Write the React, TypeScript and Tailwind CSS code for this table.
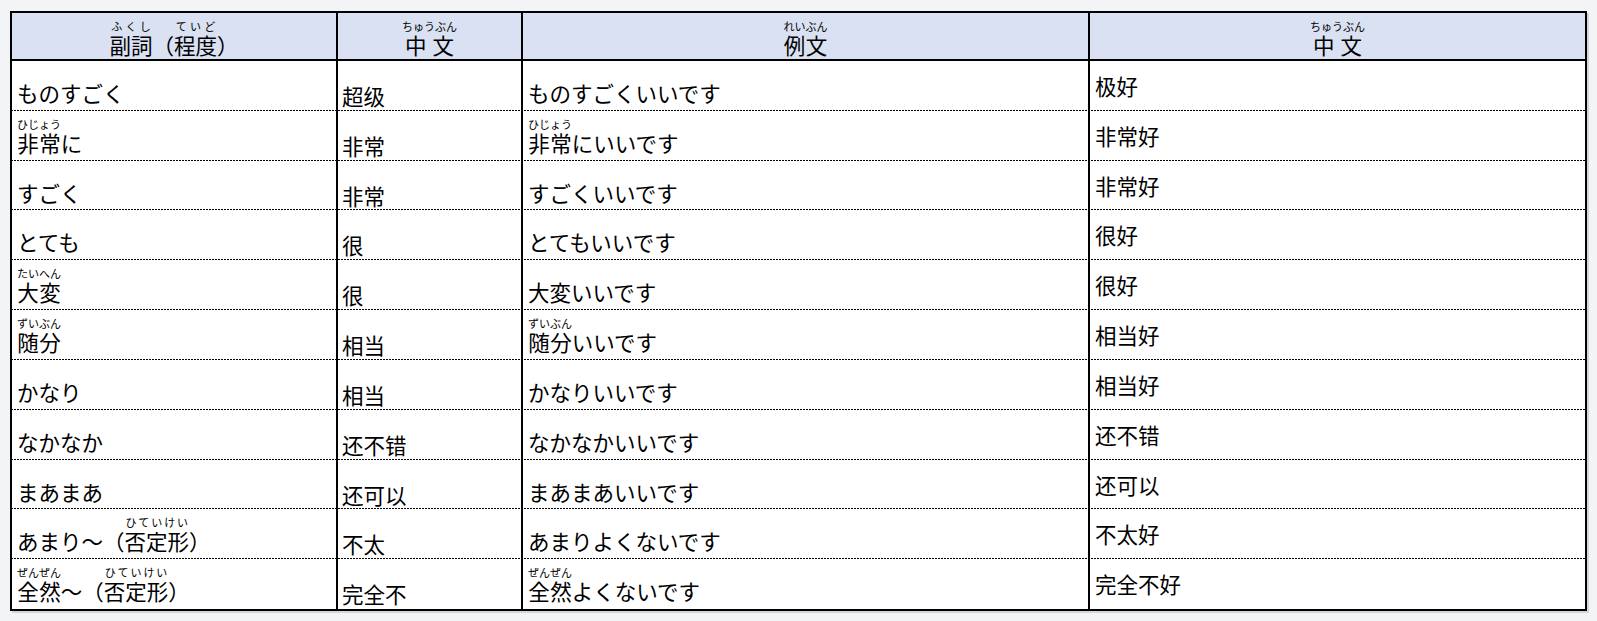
import React from "react";

type Part = string | [string, string];

type Row = {
  adverb: Part[];
  zh: string;
  example: Part[];
  meaning: string;
};

const rows: Row[] = [
  { adverb: ["ものすごく"], zh: "超级", example: ["ものすごくいいです"], meaning: "极好" },
  { adverb: [["非常", "ひじょう"], "に"], zh: "非常", example: [["非常", "ひじょう"], "にいいです"], meaning: "非常好" },
  { adverb: ["すごく"], zh: "非常", example: ["すごくいいです"], meaning: "非常好" },
  { adverb: ["とても"], zh: "很", example: ["とてもいいです"], meaning: "很好" },
  { adverb: [["大変", "たいへん"]], zh: "很", example: ["大変いいです"], meaning: "很好" },
  { adverb: [["随分", "ずいぶん"]], zh: "相当", example: [["随分", "ずいぶん"], "いいです"], meaning: "相当好" },
  { adverb: ["かなり"], zh: "相当", example: ["かなりいいです"], meaning: "相当好" },
  { adverb: ["なかなか"], zh: "还不错", example: ["なかなかいいです"], meaning: "还不错" },
  { adverb: ["まあまあ"], zh: "还可以", example: ["まあまあいいです"], meaning: "还可以" },
  { adverb: ["あまり～（", ["否定形", "ひていけい"], "）"], zh: "不太", example: ["あまりよくないです"], meaning: "不太好" },
  { adverb: [["全然", "ぜんぜん"], "～（", ["否定形", "ひていけい"], "）"], zh: "完全不", example: [["全然", "ぜんぜん"], "よくないです"], meaning: "完全不好" },
];

const Furigana = ({ parts }: { parts: Part[] }) => (
  <span>
    {parts.map((p, i) =>
      typeof p === "string" ? (
        <React.Fragment key={i}>{p}</React.Fragment>
      ) : (
        <ruby key={i}>
          {p[0]}
          <rt className="text-[11px] leading-[1.6]">
            <span className="relative top-[-2px]">{p[1]}</span>
          </rt>
        </ruby>
      )
    )}
  </span>
);

const jp = "font-['Noto_Sans_CJK_JP',sans-serif]";
const sc = "font-['Noto_Sans_CJK_SC',sans-serif]";

// dashed separator between body rows, 2px dash / 1px gap
const dashed =
  "bg-[linear-gradient(to_right,#000_2px,transparent_2px)] bg-[length:3px_1px] bg-bottom bg-repeat-x";

const App = () => {
  return (
    <div className="min-h-screen bg-[#f3f4f6] px-[10px] pt-[11px] text-black">
      <div className="border-2 border-black bg-white shadow-[2px_2px_0_rgba(0,0,0,0.12)]">
        <div className={`grid h-[48px] grid-cols-[324px_185px_567px_1fr] border-b-2 border-black bg-[#d9e1f2] text-[21.5px] leading-[1.2] ${jp}`}>
          <div className="flex items-end justify-center pb-[1.5px]">
            <Furigana parts={[["副詞", "ふくし"], "（", ["程度", "ていど"], "）"]} />
          </div>
          <div className="flex items-end justify-center border-l-2 border-black pb-[1.5px]">
            <Furigana parts={[["中文", "ちゅうぶん"]]} />
          </div>
          <div className="flex items-end justify-center border-l-2 border-black pb-[1.5px]">
            <Furigana parts={[["例文", "れいぶん"]]} />
          </div>
          <div className="flex items-end justify-center border-l-2 border-black pb-[1.5px]">
            <Furigana parts={[["中文", "ちゅうぶん"]]} />
          </div>
        </div>
        <div className="grid h-[548px] grid-rows-[repeat(11,minmax(0,1fr))]">
          {rows.map((r, i) => (
            <div
              key={i}
              className={`grid grid-cols-[324px_185px_567px_1fr] text-[21.5px] leading-[1.2] ${
                i < rows.length - 1 ? dashed : ""
              }`}
            >
              <div className={`flex items-end px-[5px] pb-[5px] ${jp}`}>
                <Furigana parts={r.adverb} />
              </div>
              <div className={`flex items-end border-l-2 border-black px-[4px] pb-[2px] ${sc}`}>
                {r.zh}
              </div>
              <div className={`flex items-end border-l-2 border-black px-[5px] pb-[5px] ${jp}`}>
                <Furigana parts={r.example} />
              </div>
              <div className={`flex items-center border-l-2 border-black px-[5px] ${sc}`}>
                {r.meaning}
              </div>
            </div>
          ))}
        </div>
      </div>
    </div>
  );
};

export default App;
